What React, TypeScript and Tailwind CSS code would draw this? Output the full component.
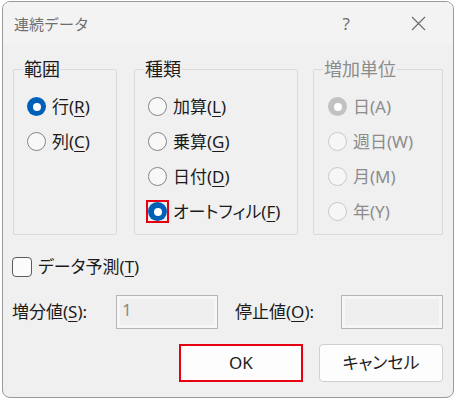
import React from "react";

const font = { fontFamily: '"Noto Sans", "Noto Sans CJK JP", sans-serif' };

function Radio({ checked, disabled, highlight }: { checked?: boolean; disabled?: boolean; highlight?: boolean }) {
  let circle: React.ReactNode;
  if (checked) {
    circle = (
      <span className={`flex w-[19px] h-[19px] rounded-full items-center justify-center ${disabled ? "bg-[#c2c2c2]" : "bg-[#005fb8]"}`}>
        <span className="w-[8px] h-[8px] rounded-full bg-white" />
      </span>
    );
  } else {
    circle = (
      <span className={`block w-[19px] h-[19px] rounded-full border ${disabled ? "border-[#c9c9c9] bg-[#f6f6f6]" : "border-[#858585] bg-[#f8f8f8]"}`} />
    );
  }
  if (highlight) {
    return <span className="flex border-2 border-[#e60012] -m-[2px]">{circle}</span>;
  }
  return circle;
}

function U({ children }: { children: React.ReactNode }) {
  return <span className="underline underline-offset-[3px] decoration-1">{children}</span>;
}

function Row({ children, radio }: { children: React.ReactNode; radio: React.ReactNode }) {
  return (
    <div className="flex items-center h-[35px]">
      {radio}
      <span className="ml-[6px] leading-[24px]">{children}</span>
    </div>
  );
}

export default function App() {
  return (
    <div className="w-[455px] h-[398px] bg-white pt-[1px] pl-[2px] [font-feature-settings:'palt']" style={font}>
      <div className="w-[452px] h-[397px] border border-[#9a9a9a] rounded-[8px] overflow-hidden flex flex-col bg-[#f0f0f0] text-[17px] text-[#1b1b1b]">
        <div className="h-[43px] bg-[#f3f3f3] flex items-center shrink-0">
          <span className="ml-[11px] text-[15px] text-[#6e6e6e] leading-[20px] [font-feature-settings:normal]">連続データ</span>
          <span className="ml-auto text-[17px] text-[#707070] leading-[20px] mr-[61px]">?</span>
          <svg width="15" height="15" viewBox="0 0 15 15" className="mr-[27px]">
            <path d="M1 1 L14 14 M14 1 L1 14" stroke="#6a6a6a" strokeWidth="1.1" fill="none" />
          </svg>
        </div>

        <div className="flex pl-[10px] pt-[12px]">
          <fieldset className="w-[104px] h-[178px] border border-[#dadada] rounded-[2px] pl-[13px]">
            <legend className="ml-[-4px] px-[1px] leading-[24px] text-[18px]">範囲</legend>
            <div className="pt-[8px]">
              <Row radio={<Radio checked />}>行(<U>R</U>)</Row>
              <Row radio={<Radio />}>列(<U>C</U>)</Row>
            </div>
          </fieldset>
          <fieldset className="ml-[17px] w-[164px] h-[178px] border border-[#dadada] rounded-[2px] pl-[13px]">
            <legend className="ml-[-4px] px-[1px] leading-[24px] text-[18px]">種類</legend>
            <div className="pt-[8px]">
              <Row radio={<Radio />}>加算(<U>L</U>)</Row>
              <Row radio={<Radio />}>乗算(<U>G</U>)</Row>
              <Row radio={<Radio />}>日付(<U>D</U>)</Row>
              <Row radio={<Radio checked highlight />}>オートフィル(<U>F</U>)</Row>
            </div>
          </fieldset>
          <fieldset className="ml-[15px] w-[130px] h-[178px] border border-[#dadada] rounded-[2px] pl-[14px] text-[#8c8c8c]">
            <legend className="ml-[-5px] px-[1px] leading-[24px] text-[18px]">増加単位</legend>
            <div className="pt-[8px]">
              <Row radio={<Radio checked disabled />}>日(A)</Row>
              <Row radio={<Radio disabled />}>週日(W)</Row>
              <Row radio={<Radio disabled />}>月(M)</Row>
              <Row radio={<Radio disabled />}>年(Y)</Row>
            </div>
          </fieldset>
        </div>

        <div className="flex items-center h-[30px] mt-[17px] pl-[9px]">
          <span className="block w-[20px] h-[20px] rounded-[4px] border border-[#5c5c5c] bg-[#fbfbfb]" />
          <span className="ml-[6px] leading-[24px]">データ予測(<U>T</U>)</span>
        </div>

        <div className="flex items-center h-[34px] mt-[13px] pl-[9px]">
          <span className="w-[104px] leading-[24px]">増分値(<U>S</U>):</span>
          <div className="w-[102px] h-[34px] border border-[#b4b4b4] bg-[#efefef] shadow-[inset_0_0_0_3px_#f6f6f6] pl-[5px] pt-[2px] text-[17px] text-[#8a8a8a] leading-[24px]">1</div>
          <span className="ml-[17px] w-[106px] leading-[24px]">停止値(<U>O</U>):</span>
          <div className="w-[102px] h-[34px] border border-[#b4b4b4] bg-[#efefef] shadow-[inset_0_0_0_3px_#f6f6f6]" />
        </div>

        <div className="flex justify-end mt-[15px] pr-[10px] gap-[16px]">
          <button className="w-[124px] h-[38px] border-2 border-[#e60012] bg-[#fdfdfd] flex items-center justify-center leading-[24px]">OK</button>
          <button className="w-[124px] h-[38px] border border-[#d0d0d0] rounded-[4px] bg-[#fdfdfd] flex items-center justify-center leading-[24px]">キャンセル</button>
        </div>
      </div>
    </div>
  );
}
